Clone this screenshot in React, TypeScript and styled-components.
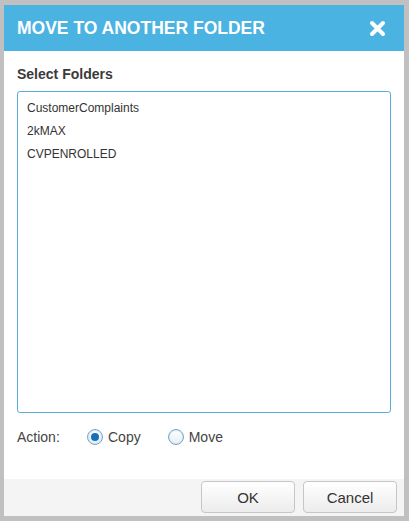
import styled, {createGlobalStyle} from "styled-components";
import {useState} from "react";

const GlobalStyle = createGlobalStyle`
  html, body {
    margin: 0;
    padding: 0;
    background: #c0c0c0;
    font-family: "Liberation Sans", Arial, sans-serif;
  }
`

const Screen = styled.div`
  width: 409px;
  height: 521px;
  padding: 5px 5px 5px 4px;
  box-sizing: border-box;
`

const Dialog = styled.div`
  width: 400px;
  height: 511px;
  background: #fff;
  display: flex;
  flex-direction: column;
`

const Header = styled.div`
  height: 46px;
  background: #4ab3e1;
  display: flex;
  align-items: center;
  justify-content: space-between;
  padding: 0 18px 0 13px;
  flex-shrink: 0;
`

const Title = styled.h2`
  margin: 0;
  color: #fff;
  font-size: 17.5px;
  font-weight: bold;
`

const CloseButton = styled.button`
  border: none;
  background: none;
  padding: 0;
  width: 17px;
  height: 17px;
  display: flex;
  cursor: pointer;
`

const Body = styled.div`
  flex: 1;
  padding: 14px 13px 0 13px;
  display: flex;
  flex-direction: column;
`

const Label = styled.div`
  font-size: 14px;
  font-weight: bold;
  color: #3a3a3a;
  height: 18px;
  line-height: 18px;
`

const FolderList = styled.ul`
  list-style: none;
  margin: 8px 0 0 0;
  padding: 5px 9px;
  height: 322px;
  box-sizing: border-box;
  border: 1px solid #5aaedb;
  border-radius: 3px;
`

const FolderItem = styled.li`
  font-size: 12px;
  color: #333;
  height: 23px;
  line-height: 23px;
`

const ActionRow = styled.div`
  display: flex;
  align-items: center;
  margin-top: 16px;
  font-size: 14px;
  color: #444;
`

const ActionLabel = styled.span`
  width: 70px;
`

const RadioOption = styled.label`
  display: flex;
  align-items: center;
  gap: 5px;
  margin-right: 27px;
  cursor: pointer;
`

const RadioCircle = styled.span<{ $checked: boolean }>`
  width: 16px;
  height: 16px;
  box-sizing: border-box;
  border-radius: 50%;
  border: 1px solid #7aa6c4;
  background: linear-gradient(#ffffff, #e6eef4);
  box-shadow: inset 0 0 0 1px #d9e7f1;
  display: flex;
  align-items: center;
  justify-content: center;

  &::after {
    content: "";
    width: 8px;
    height: 8px;
    border-radius: 50%;
    background: ${p => p.$checked ? "#1672b8" : "transparent"};
  }
`

const Footer = styled.div`
  height: 37px;
  background: #f4f4f4;
  display: flex;
  justify-content: flex-end;
  align-items: flex-start;
  gap: 8px;
  padding: 2px 7px 0 0;
  box-sizing: border-box;
  flex-shrink: 0;
`

const Button = styled.button`
  width: 94px;
  height: 32px;
  border: 1px solid #c6c6c6;
  border-radius: 4px;
  background: linear-gradient(#ffffff, #ececec);
  font-family: "Liberation Sans", Arial, sans-serif;
  font-size: 15px;
  color: #333;
  cursor: pointer;
`

const folders = ["CustomerComplaints", "2kMAX", "CVPENROLLED"]

export default function App() {
    const [action, setAction] = useState("copy")

    return (
        <Screen>
            <GlobalStyle/>
            <Dialog>
                <Header>
                    <Title>MOVE TO ANOTHER FOLDER</Title>
                    <CloseButton aria-label="Close">
                        <svg width="17" height="17" viewBox="0 0 17 17">
                            <path d="M3 3 L14 14 M14 3 L3 14" stroke="#fff" strokeWidth="4" strokeLinecap="round"/>
                        </svg>
                    </CloseButton>
                </Header>
                <Body>
                    <Label>Select Folders</Label>
                    <FolderList>
                        {folders.map(name => <FolderItem key={name}>{name}</FolderItem>)}
                    </FolderList>
                    <ActionRow>
                        <ActionLabel>Action:</ActionLabel>
                        <RadioOption onClick={() => setAction("copy")}>
                            <RadioCircle $checked={action === "copy"}/>
                            Copy
                        </RadioOption>
                        <RadioOption onClick={() => setAction("move")}>
                            <RadioCircle $checked={action === "move"}/>
                            Move
                        </RadioOption>
                    </ActionRow>
                </Body>
                <Footer>
                    <Button>OK</Button>
                    <Button>Cancel</Button>
                </Footer>
            </Dialog>
        </Screen>
    )
}
